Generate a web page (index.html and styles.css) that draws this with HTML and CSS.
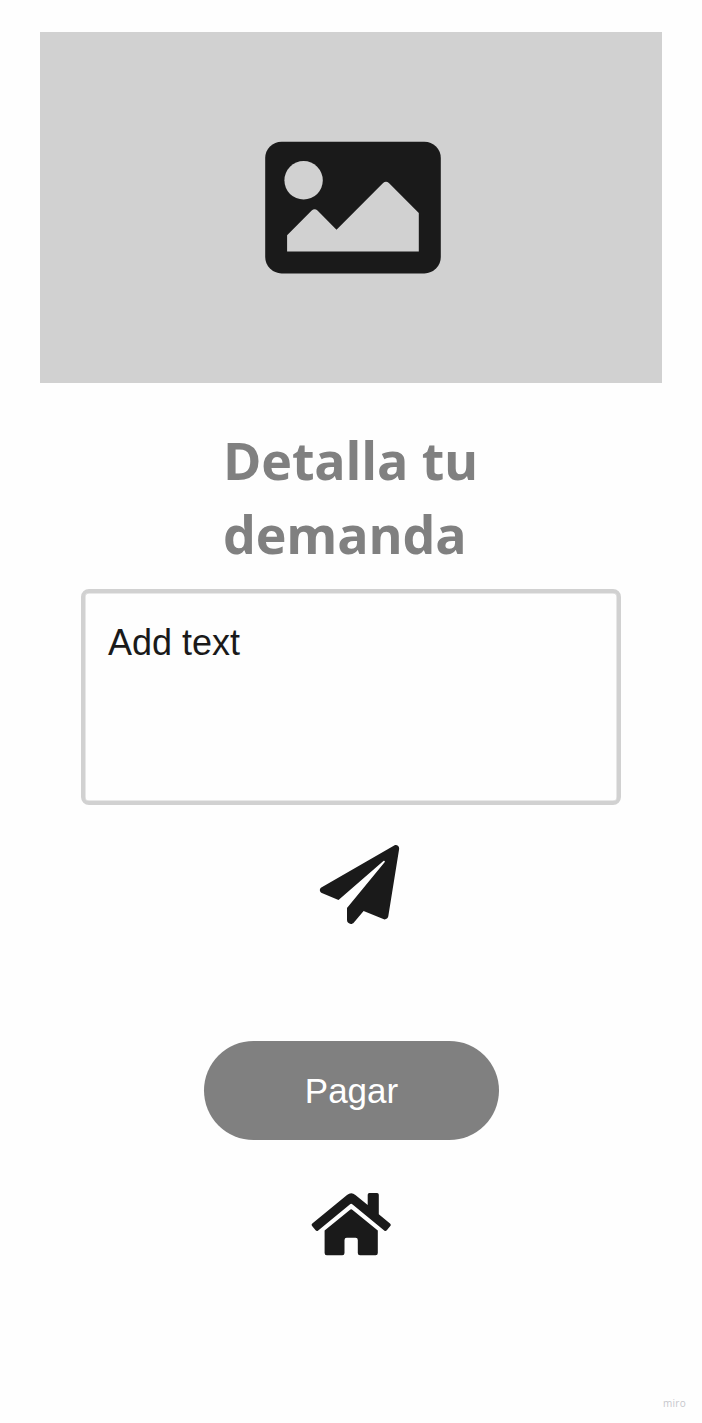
FILE: index.html
```html
<!DOCTYPE html>
<html lang="es">
<head>
<meta charset="utf-8">
<title>Detalla tu demanda</title>
<link rel="stylesheet" href="styles.css">
</head>
<body>
<main class="screen">
  <div class="hero">
    <svg class="hero-icon" viewBox="265 141 176 133" aria-hidden="true">
      <rect x="265.2" y="141.7" width="175.6" height="131.7" rx="16.4" fill="#1a1a1a"/>
      <circle cx="303.6" cy="180.3" r="19.2" fill="#d1d1d1"/>
      <path d="M287.1 251.5V235.3L311.7 210.6Q314.6 207.9 317.5 210.6L336.5 229.7L383.1 183.1Q386 180.4 388.9 183.1L418.8 213V251.5Z" fill="#d1d1d1"/>
    </svg>
  </div>
  <h1 class="title">Detalla tu<br>demanda</h1>
  <div class="field">Add text</div>
  <svg class="send" viewBox="319 844 81 81" aria-hidden="true">
    <path d="M394.2 845.4L321.3 887.5C319.1 888.9 319.5 892.1 321.8 893.1L338.5 900.1L383.4 860.9C384.3 860.2 385.4 861.3 384.6 862.2L347 908V920C347 923.8 351.7 925.2 353.9 922.4L363.6 911L383.3 919.1C385.5 920 387.9 918.6 388.3 916.3L399.1 849.2C399.6 846.1 396.7 844.1 394.2 845.4Z"/>
  </svg>
  <button class="pay" type="button">Pagar</button>
  <svg class="home" viewBox="311 1192 81 64" aria-hidden="true">
    <path d="M349.8 1209.9L324.6 1230.6V1253.1Q324.6 1255.3 326.8 1255.3H342.3Q344.5 1255.3 344.5 1253.1V1240Q344.5 1237.8 346.7 1237.8H355.6Q357.8 1237.8 357.8 1240V1253.1Q357.8 1255.3 360 1255.3H375.6Q377.8 1255.3 377.8 1253.1V1230.6L352.6 1209.9Q351.2 1208.8 349.8 1209.9Z"/>
    <path d="M390 1223.5L378.8 1214.2V1194.8Q378.8 1193.1 377.1 1193.1H369.4Q367.7 1193.1 367.7 1194.8V1205L355.4 1194.9Q351.2 1191.7 347 1194.9L312.3 1223.5Q311 1224.7 312.1 1226.1L315.6 1230.3Q316.8 1231.6 318.2 1230.5L349.8 1204.4Q351.2 1203.3 352.6 1204.4L384.2 1230.5Q385.6 1231.6 386.8 1230.3L390.3 1226.1Q391.4 1224.7 390 1223.5Z"/>
  </svg>
  <footer class="brand">miro</footer>
</main>
</body>
</html>
```
FILE: styles.css
```css
* { box-sizing: border-box; }

body {
  margin: 0;
  background: #fefefe;
}

.screen {
  width: 702px;
  height: 1423px;
  padding: 32px 16px 12px 40px;
  display: flex;
  flex-direction: column;
  align-items: flex-start;
  overflow: hidden;
}

.hero {
  width: 622px;
  height: 351px;
  padding: 109px 0 0 225px;
  background: #d1d1d1;
}

.hero-icon {
  display: block;
  width: 176px;
  height: 133px;
}

.title {
  margin: 40px 0 0 183px;
  font: 700 52px/74px "Open Sans", "Noto Sans", sans-serif;
  letter-spacing: -0.15px;
  color: #808080;
}

.field {
  width: 540px;
  height: 216px;
  margin: 18px 0 0 41px;
  padding: 29px 23px;
  border: 4px solid #d1d1d1;
  border-radius: 8px;
  box-shadow: inset 0 0 0 0.5px #d1d1d1;
  font: 36px/41px "Liberation Sans", Arial, sans-serif;
  color: #1a1a1a;
}

.send {
  width: 81px;
  height: 81px;
  margin: 39px 0 0 279px;
  fill: #1a1a1a;
}

.pay {
  width: 295px;
  height: 99px;
  margin: 116px 0 0 164px;
  padding: 0;
  border: 0;
  border-radius: 50px;
  background: #808080;
  color: #fff;
  font: 35px/40px "Liberation Sans", Arial, sans-serif;
}

.home {
  width: 81px;
  height: 64px;
  margin: 52px 0 0 271px;
  fill: #1a1a1a;
}

.brand {
  margin: auto 0 0 auto;
  font: 500 10px/16px "Open Sans", "Noto Sans", sans-serif;
  letter-spacing: 0.3px;
  color: #c6c6cc;
}
```
